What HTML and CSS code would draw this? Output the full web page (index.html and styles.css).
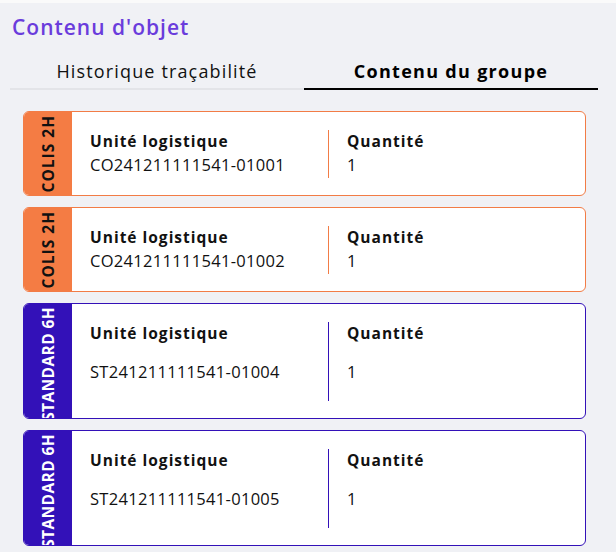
FILE: index.html
```html
<!DOCTYPE html>
<html lang="fr">
<head>
<meta charset="utf-8">
<title>Contenu d'objet</title>
<link rel="stylesheet" href="styles.css">
</head>
<body>
<div class="page">
  <h1 class="title">Contenu d'objet</h1>
  <div class="tabs">
    <div class="tab">Historique traçabilité</div>
    <div class="tab active">Contenu du groupe</div>
  </div>
  <div class="cards">
    <div class="card colis">
      <div class="tag"><span>COLIS 2H</span></div>
      <div class="body">
        <div class="col col-ul">
          <div class="label">Unité logistique</div>
          <div class="value">CO241211111541-01001</div>
        </div>
        <div class="col col-qty">
          <div class="label">Quantité</div>
          <div class="value">1</div>
        </div>
      </div>
    </div>
    <div class="card colis">
      <div class="tag"><span>COLIS 2H</span></div>
      <div class="body">
        <div class="col col-ul">
          <div class="label">Unité logistique</div>
          <div class="value">CO241211111541-01002</div>
        </div>
        <div class="col col-qty">
          <div class="label">Quantité</div>
          <div class="value">1</div>
        </div>
      </div>
    </div>
    <div class="card standard">
      <div class="tag"><span>STANDARD 6H</span></div>
      <div class="body">
        <div class="col col-ul">
          <div class="label">Unité logistique</div>
          <div class="value">ST241211111541-01004</div>
        </div>
        <div class="col col-qty">
          <div class="label">Quantité</div>
          <div class="value">1</div>
        </div>
      </div>
    </div>
    <div class="card standard">
      <div class="tag"><span>STANDARD 6H</span></div>
      <div class="body">
        <div class="col col-ul">
          <div class="label">Unité logistique</div>
          <div class="value">ST241211111541-01005</div>
        </div>
        <div class="col col-qty">
          <div class="label">Quantité</div>
          <div class="value">1</div>
        </div>
      </div>
    </div>
  </div>
</div>
</body>
</html>
```
FILE: styles.css
```css
html, body {
  margin: 0;
  padding: 0;
  background: #f0f1f5;
}
body {
  font-family: "Open Sans", "Liberation Sans", sans-serif;
  color: #111;
}
.page {
  border-top: 3px solid #fafafa;
  height: 549px;
  overflow: hidden;
}
.title {
  margin: 0;
  padding: 10px 0 0 12px;
  font-size: 21px;
  letter-spacing: 1px;
  line-height: 28px;
  font-weight: 600;
  color: #6a3cdc;
}
.tabs {
  display: flex;
  margin: 18px 18px 0 10px;
}
.tab {
  flex: 1;
  text-align: center;
  font-size: 18px;
  letter-spacing: 1.15px;
  line-height: 24px;
  padding-bottom: 5px;
  border-bottom: 2px solid #e3e4e8;
  color: #111;
}
.tab.active {
  font-weight: 700;
  letter-spacing: 1.3px;
  border-bottom-color: #000;
  color: #000;
}
.cards {
  display: flex;
  flex-direction: column;
  gap: 11px;
  margin: 21px 30px 0 23px;
}
.card {
  display: flex;
  background: #fff;
  border: 1px solid;
  border-radius: 6px;
  overflow: hidden;
}
.card.colis {
  border-color: #f27c46;
  height: 83px;
}
.card.standard {
  border-color: #3311b8;
  height: 114px;
}
.tag {
  width: 48px;
  flex: none;
  display: flex;
  align-items: center;
  justify-content: center;
  overflow: hidden;
}
.colis .tag {
  background: #f47c44;
  color: #111;
}
.standard .tag {
  background: #3311b8;
  color: #fff;
  align-items: flex-start;
  padding-top: 3px;
}
.tag span {
  writing-mode: vertical-rl;
  transform: rotate(180deg);
  white-space: nowrap;
  font-weight: 700;
  font-size: 15.5px;
  letter-spacing: 1px;
  line-height: 18px;
}
.standard .tag span {
  letter-spacing: 0.4px;
}
.body {
  flex: 1;
  display: flex;
  padding: 18px 0 17px 18px;
}
.col {
  display: flex;
  flex-direction: column;
}
.col-ul {
  width: 238px;
}
.col-qty {
  border-left: 1px solid;
  padding-left: 18px;
}
.colis .col-qty { border-left-color: #f27c46; }
.standard .col-qty { border-left-color: #3311b8; }
.label {
  font-weight: 700;
  font-size: 15.5px;
  letter-spacing: 1px;
  line-height: 22px;
}
.value {
  flex: 1;
  display: flex;
  align-items: center;
  font-size: 16.5px;
  letter-spacing: 0.3px;
  line-height: 26px;
}
.standard .value {
  padding-bottom: 2px;
}
```
